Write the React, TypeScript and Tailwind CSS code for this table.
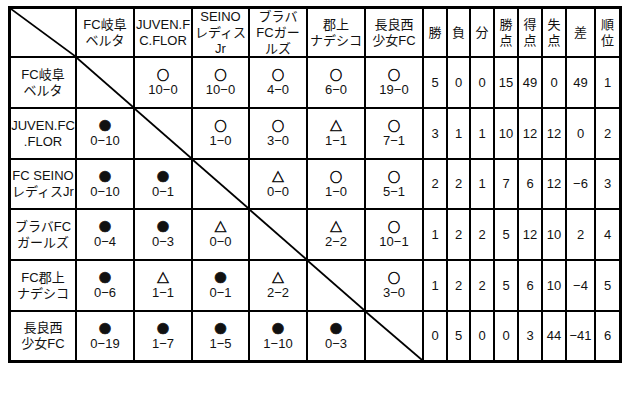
const teams = [
  ['FC岐阜', 'ベルタ'],
  ['JUVEN.FC', '.FLOR'],
  ['FC SEINO', 'レディスJr'],
  ['ブラバFC', 'ガールズ'],
  ['FC郡上', 'ナデシコ'],
  ['長良西', '少女FC'],
];

const heads = [
  ['FC岐阜', 'ベルタ'],
  ['JUVEN.F', 'C.FLOR'],
  ['SEINO', 'レディス', 'Jr'],
  ['ブラバ', 'FCガー', 'ルズ'],
  ['郡上', 'ナデシコ'],
  ['長良西', '少女FC'],
];

const statHeads = [['勝'], ['負'], ['分'], ['勝', '点'], ['得', '点'], ['失', '点'], ['差'], ['順', '位']];

// [mark, score] per opponent, null on the diagonal
const results: ([string, string] | null)[][] = [
  [null, ['○', '10−0'], ['○', '10−0'], ['○', '4−0'], ['○', '6−0'], ['○', '19−0']],
  [['●', '0−10'], null, ['○', '1−0'], ['○', '3−0'], ['△', '1−1'], ['○', '7−1']],
  [['●', '0−10'], ['●', '0−1'], null, ['△', '0−0'], ['○', '1−0'], ['○', '5−1']],
  [['●', '0−4'], ['●', '0−3'], ['△', '0−0'], null, ['△', '2−2'], ['○', '10−1']],
  [['●', '0−6'], ['△', '1−1'], ['●', '0−1'], ['△', '2−2'], null, ['○', '3−0']],
  [['●', '0−19'], ['●', '1−7'], ['●', '1−5'], ['●', '1−10'], ['●', '0−3'], null],
];

const stats = [
  ['5', '0', '0', '15', '49', '0', '49', '1'],
  ['3', '1', '1', '10', '12', '12', '0', '2'],
  ['2', '2', '1', '7', '6', '12', '−6', '3'],
  ['1', '2', '2', '5', '12', '10', '2', '4'],
  ['1', '2', '2', '5', '6', '10', '−4', '5'],
  ['0', '5', '0', '0', '3', '44', '−41', '6'],
];

function Diagonal() {
  return (
    <svg className="absolute inset-0 h-full w-full" preserveAspectRatio="none" viewBox="0 0 100 100">
      <line x1="0" y1="0" x2="100" y2="100" stroke="#000" strokeWidth="1.8" vectorEffect="non-scaling-stroke" />
    </svg>
  );
}

function Cell({ lines }: { lines: string[] }) {
  return (
    <div className="flex flex-col items-center justify-center bg-white text-center leading-[16px]">
      {lines.map((l, i) => (
        <span key={i} className="whitespace-nowrap">
          {l}
        </span>
      ))}
    </div>
  );
}

export default function App() {
  return (
    <div className="h-[402px] w-[630px] bg-white pl-[8px] pt-[6px]">
      <div
        className="w-[614px] border-[3px] border-black text-[13px] text-[#111]"
        style={{ fontFamily: '"Liberation Sans", "Noto Sans CJK JP", sans-serif' }}
      >
        <div className="grid grid-cols-[64px_56px_56px_55px_56px_56px_56px_22px_21px_22px_22px_22px_22px_27px_23px] grid-rows-[47px_49px_49px_48px_49px_49px_48px] gap-[2px] bg-black">
          <div className="relative bg-white">
            <Diagonal />
          </div>
          {heads.map((h, i) => (
            <Cell key={'h' + i} lines={h} />
          ))}
          {statHeads.map((h, i) => (
            <Cell key={'s' + i} lines={h} />
          ))}
          {teams.map((t, r) => (
            <div key={'r' + r} className="contents">
              <Cell lines={t} />
              {results[r].map((res, c) =>
                res ? (
                  <div key={c} className="flex flex-col items-center justify-center gap-[2px] bg-white">
                    <span className="font-['Noto_Sans_CJK_JP',sans-serif] text-[12px] leading-[13px] [-webkit-text-stroke:0.7px_#111]">
                      {res[0]}
                    </span>
                    <span className="leading-[14px]">{res[1]}</span>
                  </div>
                ) : (
                  <div key={c} className="relative bg-white">
                    <Diagonal />
                  </div>
                ),
              )}
              {stats[r].map((s, c) => (
                <div key={'v' + c} className="flex items-center justify-center bg-white">
                  {s}
                </div>
              ))}
            </div>
          ))}
        </div>
      </div>
    </div>
  );
}
